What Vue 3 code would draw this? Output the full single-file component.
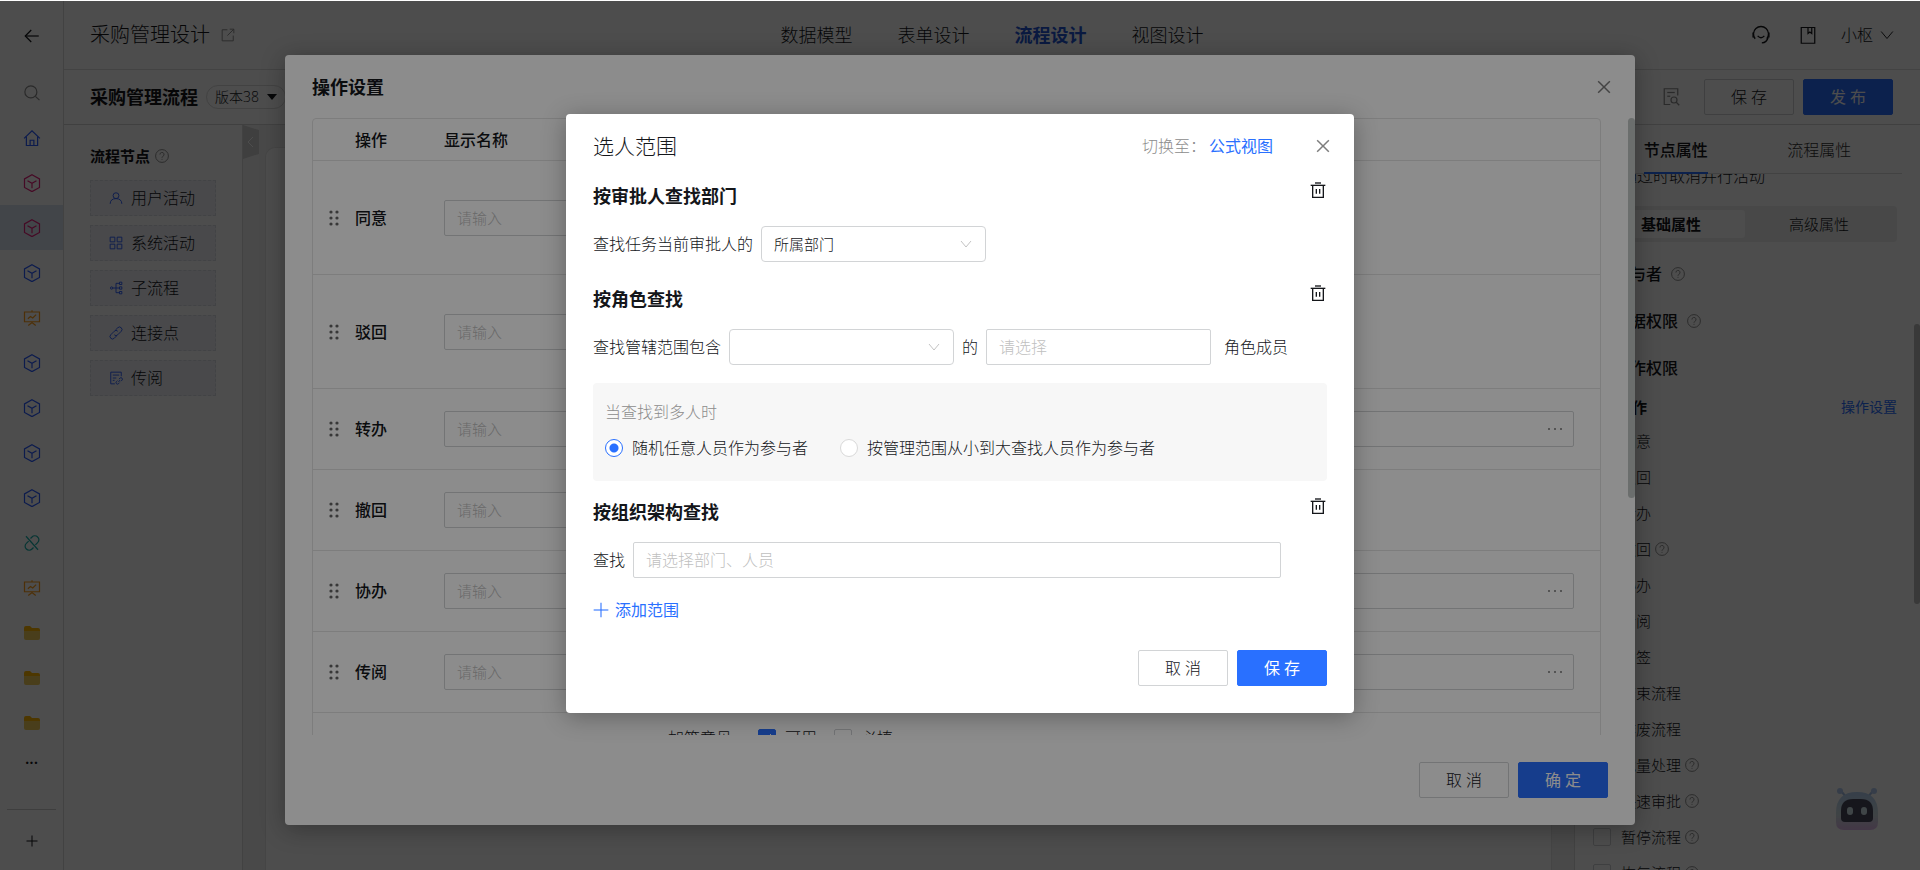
<script setup>
import { ref } from 'vue'

// 24x24 线性图标
const icons = {
  back: ['M21 12H3', 'M11 4l-8 8 8 8'],
  search: ['M10.5 2.5a8 8 0 1 0 0 16a8 8 0 1 0 0-16', 'M16.5 16.5l5.5 5'],
  home: ['M1.500 12.500L12 2.500l10.500 10', 'M4.500 10v12h15V10', 'M9.500 22v-7h5v7'],
  cube: ['M12 1l10 5.500v11.500l-10 5.500-10-5.500V6.500z', 'M6 9l6 3.500 6-3.500', 'M12 12.500V19'],
  board: ['M2 4h20v13H2z', 'M12 1.500V4', 'M6.500 13l3.500-3 3 2 4.500-4.500', 'M7 22l5-4 5 4'],
  unlink: ['M10 6l2-2a5 5 0 0 1 7.500 0a5 5 0 0 1 0 7.500l-3 3', 'M14 18l-2 2a5 5 0 0 1-7.500 0a5 5 0 0 1 0-7.500l3-3', 'M4 3l16 18'],
  user: ['M12 3a5 5 0 1 0 0 10a5 5 0 1 0 0-10', 'M2 22c0-6 4-9 10-9s10 3 10 9'],
  grid: ['M2 2h8v8H2z', 'M14 2h8v8h-8z', 'M2 14h8v8H2z', 'M14 14h8v8h-8z'],
  tree: ['M4.500 10a2 2 0 1 0 0 4a2 2 0 1 0 0-4', 'M6.500 12H18', 'M18 4h-6v16h6', 'M18 2h4v4h-4z', 'M18 10h4v4h-4z', 'M18 18h4v4h-4z'],
  link: ['M11 7l4-4a4 4 0 0 1 6 6l-6 6a4 4 0 0 1-6 0', 'M13 17l-4 4a4 4 0 0 1-6-6l6-6a4 4 0 0 1 6 0'],
  note: ['M21 9V2H3v20h7', 'M6.500 7h11', 'M6.500 12h6', 'M6.500 16h3', 'M17 14l2-2a2.500 2.500 0 0 1 3.500 3.500l-2 2', 'M18 20l-2 2a2.500 2.500 0 0 1-3.500-3.500l2-2', 'M16 19l3-3.500'],
  help: ['M12 1a11 11 0 1 0 0 22a11 11 0 1 0 0-22', 'M8.500 9.500a3.500 3.500 0 1 1 5 3q-1.500 1-1.500 2.500', 'M12 17v1.500'],
  external: ['M11 3H2v19h19v-9', 'M15 2h7v7', 'M22 2L11 13'],
  headset: ['M5 16.500a9 9 0 1 1 14 0', 'M2.500 9v6', 'M21.500 9v6', 'M8 13q4 4.500 8 0', 'M20.500 15q-1.500 6-7.500 6.500'],
  book: ['M3 2h18v21H3z', 'M12 2v8l2.500-2 2.500 2V2'],
  inspect: ['M21 10V1H3v21h8', 'M7 6h10', 'M7 11h4', 'M16 12a4 4 0 1 0 0 8a4 4 0 1 0 0-8', 'M19 19l4 4'],
  down: ['M2 6l10 12L22 6'],
  left: ['M16 2L6 12l10 10'],
  close: ['M2 2l20 20', 'M22 2L2 22'],
  plus: ['M12 1v22', 'M1 12h22'],
  trash: ['M7.500 1.500h9', 'M1 5h22', 'M4 5v18h16V5', 'M9.500 10.500v7', 'M14.500 10.500v7']
}

const menus = [
  { icon: 'home', color: 'blue' },
  { icon: 'cube', color: 'pink' },
  { icon: 'cube', color: 'pink', active: true },
  { icon: 'cube', color: 'blue' },
  { icon: 'board', color: 'orange' },
  { icon: 'cube', color: 'blue' },
  { icon: 'cube', color: 'blue' },
  { icon: 'cube', color: 'blue' },
  { icon: 'cube', color: 'blue' },
  { icon: 'unlink', color: 'teal' },
  { icon: 'board', color: 'orange' },
  { icon: 'folder' },
  { icon: 'folder' },
  { icon: 'folder' }
]

const navs = ['数据模型', '表单设计', '流程设计', '视图设计']
const currentNav = ref('流程设计')

const nodes = [
  { icon: 'user', name: '用户活动' },
  { icon: 'grid', name: '系统活动' },
  { icon: 'tree', name: '子流程' },
  { icon: 'link', name: '连接点' },
  { icon: 'note', name: '传阅' }
]

const rows = [
  { name: '同意', tall: true },
  { name: '驳回', tall: true },
  { name: '转办', picker: true },
  { name: '撤回' },
  { name: '协办', picker: true },
  { name: '传阅', picker: true }
]

const permissions = [
  { name: '同意' },
  { name: '驳回' },
  { name: '转办' },
  { name: '撤回', help: true },
  { name: '协办' },
  { name: '传阅' },
  { name: '加签' },
  { name: '结束流程' },
  { name: '作废流程' },
  { name: '批量处理', help: true },
  { name: '快速审批', help: true },
  { name: '暂停流程', help: true },
  { name: '恢复流程', help: true }
]

const department = ref('所属部门')
const scope = ref('')
const multiple = ref('random')
</script>

<template>
  <div class="app">
    <aside class="sidebar">
      <button class="side-back" aria-label="返回">
        <svg class="icon i18" viewBox="0 0 24 24"><path v-for="d in icons.back" :key="d" :d="d" /></svg>
      </button>
      <button class="side-item grey" aria-label="搜索">
        <svg class="icon i18" viewBox="0 0 24 24"><path v-for="d in icons.search" :key="d" :d="d" /></svg>
      </button>
      <button
        v-for="(menu, index) in menus"
        :key="index"
        class="side-item"
        :class="[menu.color, { active: menu.active }]"
        :aria-label="menu.icon"
      >
        <svg v-if="menu.icon === 'folder'" class="i18" viewBox="0 0 18 18">
          <path d="M1 6h16v8q0 2-2 2H3q-2 0-2-2z" fill="#f5cf5c" />
          <path d="M1 7V4q0-2 2-2h4l2 2h6q2 0 2 2v1z" fill="#ffb800" />
        </svg>
        <svg v-else class="icon i18" viewBox="0 0 24 24"><path v-for="d in icons[menu.icon]" :key="d" :d="d" /></svg>
      </button>
      <span class="side-more">...</span>
      <button class="side-add" aria-label="新增">
        <svg class="icon i12 bold" viewBox="0 0 24 24"><path v-for="d in icons.plus" :key="d" :d="d" /></svg>
      </button>
    </aside>

    <div class="main">
      <header class="header">
        <div class="header-title">
          <span>采购管理设计</span>
          <svg class="icon i14 grey" viewBox="0 0 24 24"><path v-for="d in icons.external" :key="d" :d="d" /></svg>
        </div>
        <nav class="header-nav">
          <a
            v-for="nav in navs"
            :key="nav"
            href="#"
            :class="{ current: nav === currentNav }"
            @click.prevent="currentNav = nav"
          >{{ nav }}</a>
        </nav>
        <div class="header-user">
          <svg class="icon i20" viewBox="0 0 24 24"><path v-for="d in icons.headset" :key="d" :d="d" /></svg>
          <svg class="icon i18" viewBox="0 0 24 24"><path v-for="d in icons.book" :key="d" :d="d" /></svg>
          <button class="user-btn">
            小枢
            <svg class="icon i14" viewBox="0 0 24 24"><path v-for="d in icons.down" :key="d" :d="d" /></svg>
          </button>
        </div>
      </header>

      <div class="toolbar">
        <strong class="flow-name">采购管理流程</strong>
        <button class="version">版本38<span class="caret"></span></button>
        <div class="toolbar-right">
          <svg class="icon i18 grey" viewBox="0 0 24 24"><path v-for="d in icons.inspect" :key="d" :d="d" /></svg>
          <button class="btn">保 存</button>
          <button class="btn primary">发 布</button>
        </div>
      </div>

      <div class="workspace">
        <section class="node-panel">
          <h3>
            流程节点
            <svg class="icon i14 grey" viewBox="0 0 24 24"><path v-for="d in icons.help" :key="d" :d="d" /></svg>
          </h3>
          <div v-for="node in nodes" :key="node.name" class="node">
            <svg class="icon i14 blue" viewBox="0 0 24 24"><path v-for="d in icons[node.icon]" :key="d" :d="d" /></svg>
            {{ node.name }}
          </div>
        </section>

        <div class="canvas">
          <button class="collapse" aria-label="收起">
            <svg class="icon i12 bold" viewBox="0 0 24 24"><path v-for="d in icons.left" :key="d" :d="d" /></svg>
          </button>
          <div class="canvas-card"></div>
        </div>

        <section class="props">
          <div class="tabs">
            <button class="tab current">节点属性</button>
            <button class="tab">流程属性</button>
          </div>
          <div class="props-body">
            <label class="perm cut-line"><input type="checkbox" />通过时取消并行活动</label>
            <div class="segment">
              <button class="current">基础属性</button>
              <button>高级属性</button>
            </div>
            <h4>
              参与者
              <svg class="icon i14 grey" viewBox="0 0 24 24"><path v-for="d in icons.help" :key="d" :d="d" /></svg>
            </h4>
            <h4>
              数据权限
              <svg class="icon i14 grey" viewBox="0 0 24 24"><path v-for="d in icons.help" :key="d" :d="d" /></svg>
            </h4>
            <h4>操作权限</h4>
            <div class="perm-head">
              <label><input type="checkbox" />操作</label>
              <a href="#" @click.prevent>操作设置</a>
            </div>
            <label v-for="item in permissions" :key="item.name" class="perm">
              <input type="checkbox" />{{ item.name }}
              <svg v-if="item.help" class="icon i14 grey" viewBox="0 0 24 24"><path v-for="d in icons.help" :key="d" :d="d" /></svg>
            </label>
          </div>
          <span class="props-scroll"></span>
        </section>
      </div>
    </div>

    <svg class="robot" viewBox="0 0 46 46">
      <defs>
        <linearGradient id="robotShell" x1="0" y1="0" x2="0" y2="1">
          <stop offset="0" stop-color="#b4d2f5" />
          <stop offset="0.6" stop-color="#d2e1e6" />
          <stop offset="1" stop-color="#e1b9eb" />
        </linearGradient>
      </defs>
      <path d="M6 5l6 7M38 5l-6 7" stroke="#a5bee6" stroke-width="2" />
      <circle cx="5" cy="5" r="3" fill="#b4cdf5" />
      <circle cx="39" cy="5" r="3" fill="#b4cdf5" />
      <path d="M1 27Q1 6 22 6t21 21v9q0 8-8 8H9q-8 0-8-8z" fill="url(#robotShell)" />
      <path d="M6 25q0-12 12-12h8q12 0 12 12v7q0 4-4 4H10q-4 0-4-4z" fill="#4b4b5f" />
      <rect x="12" y="21" width="6" height="8" rx="3" fill="#d2e6eb" />
      <rect x="26" y="21" width="6" height="8" rx="3" fill="#d2e6eb" />
    </svg>

    <!-- 操作设置 -->
    <div class="mask">
      <div class="dialog setting" role="dialog" aria-label="操作设置">
        <div class="setting-head">
          <h2>操作设置</h2>
          <button class="icon-btn" aria-label="关闭">
            <svg class="icon i14 heavy" viewBox="0 0 24 24"><path v-for="d in icons.close" :key="d" :d="d" /></svg>
          </button>
        </div>
        <div class="setting-body">
          <table>
            <thead>
              <tr>
                <th class="col-drag"></th>
                <th class="col-name">操作</th>
                <th class="col-label">显示名称</th>
                <th></th>
              </tr>
            </thead>
            <tbody>
              <tr v-for="row in rows" :key="row.name" :class="{ tall: row.tall }">
                <td class="col-drag">
                  <svg class="drag" viewBox="0 0 10 18">
                    <circle v-for="n in 6" :key="n" :cx="n % 2 ? 2 : 8" :cy="Math.ceil(n / 2) * 6 - 3" r="1.600" />
                  </svg>
                </td>
                <td class="col-name">{{ row.name }}</td>
                <td class="col-label"><input class="text-input" placeholder="请输入" :aria-label="row.name" /></td>
                <td class="col-extra">
                  <button v-if="row.picker" class="picker" aria-label="选择">
                    <svg class="dots" viewBox="0 0 16 4">
                      <circle v-for="n in 3" :key="n" :cx="n * 6 - 4" cy="2" r="1" />
                    </svg>
                  </button>
                </td>
              </tr>
              <tr class="tall">
                <td></td>
                <td></td>
                <td></td>
                <td class="col-opinion">
                  <div class="opinion">
                    <span>加签意见</span>
                    <label><input type="checkbox" checked />可用</label>
                    <label><input type="checkbox" />必填</label>
                  </div>
                </td>
              </tr>
            </tbody>
          </table>
          <span class="setting-scroll"></span>
        </div>
        <div class="dialog-foot">
          <button class="btn">取 消</button>
          <button class="btn primary">确 定</button>
        </div>
      </div>
    </div>

    <!-- 选人范围 -->
    <div class="mask mask-top">
      <div class="dialog range" role="dialog" aria-label="选人范围">
        <div class="range-head">
          <h2>选人范围</h2>
          <span class="switch">切换至：</span>
          <a href="#" @click.prevent>公式视图</a>
          <button class="icon-btn" aria-label="关闭">
            <svg class="icon i14 heavy" viewBox="0 0 24 24"><path v-for="d in icons.close" :key="d" :d="d" /></svg>
          </button>
        </div>

        <div class="rule-title">
          <h3>按审批人查找部门</h3>
          <button class="trash" aria-label="删除">
            <svg class="icon i16 bold" viewBox="0 0 24 24"><path v-for="d in icons.trash" :key="d" :d="d" /></svg>
          </button>
        </div>
        <div class="rule-row">
          <label for="department">查找任务当前审批人的</label>
          <div class="select">
            <select id="department" v-model="department">
              <option>所属部门</option>
            </select>
            <svg class="icon i12" viewBox="0 0 24 24"><path v-for="d in icons.down" :key="d" :d="d" /></svg>
          </div>
        </div>

        <div class="rule-title">
          <h3>按角色查找</h3>
          <button class="trash" aria-label="删除">
            <svg class="icon i16 bold" viewBox="0 0 24 24"><path v-for="d in icons.trash" :key="d" :d="d" /></svg>
          </button>
        </div>
        <div class="rule-row">
          <label for="scope">查找管辖范围包含</label>
          <div class="select">
            <select id="scope" v-model="scope">
              <option value=""></option>
            </select>
            <svg class="icon i12" viewBox="0 0 24 24"><path v-for="d in icons.down" :key="d" :d="d" /></svg>
          </div>
          <label for="role">的</label>
          <input id="role" class="text-input role" placeholder="请选择" />
          <span class="role-suffix">角色成员</span>
        </div>
        <div class="multi">
          <p>当查找到多人时</p>
          <div class="radios">
            <label><input v-model="multiple" type="radio" value="random" />随机任意人员作为参与者</label>
            <label><input v-model="multiple" type="radio" value="scope" />按管理范围从小到大查找人员作为参与者</label>
          </div>
        </div>

        <div class="rule-title">
          <h3>按组织架构查找</h3>
          <button class="trash" aria-label="删除">
            <svg class="icon i16 bold" viewBox="0 0 24 24"><path v-for="d in icons.trash" :key="d" :d="d" /></svg>
          </button>
        </div>
        <div class="rule-row org-row">
          <label for="org">查找</label>
          <input id="org" class="text-input" placeholder="请选择部门、人员" />
        </div>

        <button class="add">
          <svg class="icon i16" viewBox="0 0 24 24"><path v-for="d in icons.plus" :key="d" :d="d" /></svg>
          添加范围
        </button>

        <div class="dialog-foot">
          <button class="btn">取 消</button>
          <button class="btn primary">保 存</button>
        </div>
      </div>
    </div>
  </div>
</template>

<style>
body {
  margin: 0;
  background: #fff;
}
</style>

<style scoped>
.app {
  position: relative;
  display: flex;
  height: 100vh;
  padding-top: 1px;
  box-sizing: border-box;
  overflow: hidden;
  font-family: 'Open Sans', 'Noto Sans CJK SC', sans-serif;
  font-size: 16px;
  font-weight: 300;
  line-height: 24px;
  color: #14161a;
}

.app * {
  box-sizing: border-box;
}

h2,
h3,
h4,
p {
  margin: 0;
}

button,
input,
select {
  font: inherit;
  color: inherit;
}

button {
  padding: 0;
  border: none;
  background: none;
  cursor: pointer;
}

a {
  color: #2970ff;
  font-weight: 400;
  text-decoration: none;
}

.icon {
  flex: none;
  fill: none;
  stroke: currentColor;
  stroke-width: 1.6;
}

.icon.bold {
  stroke-width: 2;
}

.icon.heavy {
  stroke-width: 2.6;
}

.i12 {
  width: 12px;
  height: 12px;
}

.i14 {
  width: 14px;
  height: 14px;
}

.i16 {
  width: 16px;
  height: 16px;
}

.i18 {
  width: 18px;
  height: 18px;
}

.i20 {
  width: 20px;
  height: 20px;
}

.blue {
  color: #2a5cff;
}

.pink {
  color: #e8207c;
}

.orange {
  color: #ff9f1a;
}

.teal {
  color: #16b3ac;
}

.grey {
  color: #8c8c8c;
}

/* 左侧菜单 */
.sidebar {
  display: flex;
  flex: none;
  flex-direction: column;
  align-items: center;
  width: 64px;
  border-right: 1px solid #dcdcdc;
}

.side-back {
  display: flex;
  flex: none;
  align-items: center;
  height: 69px;
}

.side-item {
  display: flex;
  flex: none;
  align-items: center;
  justify-content: center;
  width: 100%;
  height: 45px;
}

.side-item.active {
  background: #dae6f2;
}

.side-more {
  height: 64px;
  line-height: 26px;
  font-weight: 600;
}

.side-add {
  display: flex;
  justify-content: center;
  width: 49px;
  padding-top: 25px;
  border-top: 1px solid #d0d0d0;
}

/* 顶部 */
.main {
  display: flex;
  flex: 1;
  flex-direction: column;
  min-width: 0;
}

.header {
  display: grid;
  flex: none;
  grid-template-columns: 1fr auto 1fr;
  align-items: center;
  height: 69px;
  padding: 0 26px;
  border-bottom: 1px solid #dedede;
}

.header-title {
  display: flex;
  align-items: center;
  gap: 11px;
  font-size: 20px;
}

.header-nav {
  display: flex;
  gap: 45px;
  font-size: 18px;
}

.header-nav a {
  color: inherit;
  font-weight: 300;
}

.header-nav a.current {
  color: #2457d6;
  font-weight: 700;
}

.header-user {
  display: flex;
  align-items: center;
  justify-content: flex-end;
  gap: 28px;
}

.user-btn {
  display: flex;
  align-items: center;
  gap: 7px;
  margin-left: -4px;
}

.toolbar {
  display: flex;
  flex: none;
  align-items: center;
  height: 55px;
  padding: 0 27px 0 26px;
  border-bottom: 1px solid #d8d8d8;
}

.flow-name {
  font-size: 18px;
  font-weight: 700;
}

.version {
  display: flex;
  align-items: center;
  gap: 8px;
  height: 24px;
  margin-left: 8px;
  padding: 0 8px;
  border: 1px solid #dcdcdc;
  border-radius: 12px;
  font-size: 14px;
}

.caret {
  border: 5px solid transparent;
  border-top: 6px solid #14161a;
  border-bottom: none;
}

.toolbar-right {
  display: flex;
  align-items: center;
  gap: 9px;
  margin-left: auto;
}

.toolbar-right .icon {
  margin-right: 15px;
}

.btn {
  width: 90px;
  height: 36px;
  border: 1px solid #d2d4d6;
  border-radius: 2px;
  background: #fff;
}

.btn.primary {
  border-color: #2970ff;
  background: #2970ff;
  color: #fff;
  font-weight: 400;
}

/* 工作区 */
.workspace {
  display: flex;
  flex: 1;
  min-height: 0;
}

.node-panel {
  display: flex;
  flex: none;
  flex-direction: column;
  gap: 9px;
  width: 179px;
  padding: 18px 26px 0;
  border-right: 1px solid #dcdcdc;
}

.node-panel h3 {
  display: flex;
  align-items: center;
  gap: 5px;
  height: 25px;
  margin-bottom: 3px;
  font-size: 15px;
  font-weight: 600;
}

.node {
  display: flex;
  align-items: center;
  gap: 8px;
  height: 36px;
  padding-left: 18px;
  border: 1px dashed #dcdfe6;
  background: #f2f4fa;
}

.canvas {
  position: relative;
  display: flex;
  flex: 1;
  padding: 22px 22px 0;
  background: #f3f3f3;
}

.canvas-card {
  flex: 1;
  border: 1px solid #e6e6e6;
  border-bottom: none;
  border-radius: 10px 10px 0 0;
  background: #fff;
}

.collapse {
  position: absolute;
  top: 0;
  left: 0;
  display: flex;
  align-items: center;
  justify-content: center;
  width: 16px;
  height: 34px;
  background: #d3d3d3;
  color: #fff;
  clip-path: polygon(0 0, 100% 15%, 100% 85%, 0 100%);
}

.props {
  position: relative;
  display: flex;
  flex: none;
  flex-direction: column;
  width: 346px;
  padding: 0 18px;
  border-left: 1px solid #dcdcdc;
}

.tabs {
  display: flex;
  flex: none;
  height: 49px;
  padding: 0 11px;
  border-bottom: 1px solid #dcdcdc;
}

.tab {
  flex: 1;
  height: 49px;
  color: #333;
}

.tab.current {
  background: linear-gradient(#2970ff, #2970ff) center bottom / 64px 2px no-repeat;
  color: #14161a;
  font-weight: 500;
}

.props-body {
  display: flex;
  flex: 1;
  flex-direction: column;
  min-height: 0;
  padding-right: 5px;
  overflow: hidden;
}

.segment {
  display: flex;
  flex: none;
  height: 36px;
  margin-bottom: 8px;
  padding: 4px;
  border-radius: 4px;
  background: #efefef;
  font-size: 15px;
}

.segment button {
  flex: 1;
  border-radius: 3px;
}

.segment .current {
  background: #fff;
  font-weight: 600;
}

.props h4 {
  display: flex;
  flex: none;
  align-items: center;
  gap: 9px;
  height: 47px;
  padding-left: 21px;
  font-size: 16px;
  font-weight: 500;
}

.perm-head {
  display: flex;
  flex: none;
  align-items: center;
  justify-content: space-between;
  height: 32px;
  font-size: 14px;
}

.perm-head label {
  display: flex;
  align-items: center;
  gap: 6px;
  font-size: 15px;
  font-weight: 600;
}

.perm {
  display: flex;
  flex: none;
  align-items: center;
  height: 36px;
  font-size: 15px;
}

.perm input[type='checkbox'] {
  margin-right: 10px;
}

.perm .icon {
  margin-left: 4px;
}

.perm.cut-line {
  margin: -16px 0 12px;
  font-size: 16px;
}

input[type='checkbox'] {
  width: 18px;
  height: 18px;
  margin: 0;
  border: 1px solid #d0d2d6;
  border-radius: 2px;
  background: #fff;
  appearance: none;
}

input[type='checkbox']:checked {
  border-color: #2970ff;
  background: linear-gradient(135deg, transparent 48%, #fff 48%, #fff 56%, transparent 56%) center / 8px 8px no-repeat #2970ff;
}

.props-scroll {
  position: absolute;
  top: 199px;
  right: 0;
  width: 6px;
  height: 280px;
  border-radius: 3px;
  background: #bfbfbf;
}

.robot {
  position: absolute;
  right: 39px;
  bottom: 38px;
  width: 46px;
  height: 46px;
}

/* 弹窗 */
.mask {
  position: absolute;
  inset: 1px 0 0;
  display: flex;
  align-items: stretch;
  justify-content: center;
  padding: 54px 0 45px;
  background: rgba(0, 0, 0, 0.45);
}

.mask-top {
  align-items: flex-start;
  padding-top: 113px;
}

.dialog {
  display: flex;
  flex-direction: column;
  max-width: 100%;
  border-radius: 4px;
  background: #fff;
  box-shadow: 0 4px 24px rgba(0, 0, 0, 0.3);
}

.icon-btn {
  display: flex;
  color: #7d7d7d;
}

.dialog-foot {
  display: flex;
  justify-content: flex-end;
  gap: 9px;
}

.setting {
  width: 1350px;
  padding: 0 0 27px 27px;
}

.setting-head {
  display: flex;
  align-items: center;
  justify-content: space-between;
  height: 63px;
  padding-right: 24px;
}

.setting-head h2 {
  font-size: 18px;
  font-weight: 600;
}

.setting-body {
  position: relative;
  flex: 1;
  min-height: 0;
  padding-right: 34px;
  overflow: hidden;
}

.setting-scroll {
  position: absolute;
  top: 0;
  right: 0;
  width: 7px;
  height: 380px;
  border-radius: 4px;
  background: #c3c8c7;
}

.setting .dialog-foot {
  padding: 27px 27px 0 0;
}

table {
  width: 100%;
  border: 1px solid #e4e4e4;
  border-radius: 4px;
  border-spacing: 0;
  table-layout: fixed;
}

th,
td {
  height: 81px;
  padding: 0;
  border-bottom: 1px solid #e4e4e4;
  text-align: left;
}

th {
  height: 42px;
  font-weight: 500;
}

.tall td {
  height: 114px;
}

.col-drag {
  width: 42px;
  padding-left: 16px;
}

.drag {
  display: block;
  width: 10px;
  height: 18px;
  fill: #666;
}

.col-name {
  width: 89px;
  font-weight: 500;
}

.col-label {
  width: 224px;
}

td.col-label {
  padding-right: 24px;
}

.text-input {
  width: 100%;
  height: 36px;
  padding: 0 12px;
  border: 1px solid #d2d4d6;
  border-radius: 2px;
  outline: none;
  background: #fff;
}

.text-input::placeholder {
  color: #bfbfbf;
  opacity: 1;
}

table .text-input {
  font-size: 15px;
}

.col-extra {
  padding: 0 26px 0 240px;
}

.picker {
  display: flex;
  align-items: center;
  justify-content: flex-end;
  width: 100%;
  height: 36px;
  padding-right: 10px;
  border: 1px solid #d2d4d6;
  border-radius: 2px;
}

.dots {
  width: 16px;
  height: 4px;
  fill: #777;
}

td.col-opinion {
  padding-top: 13px;
  vertical-align: top;
}

.opinion {
  display: flex;
  align-items: center;
}

.opinion span {
  margin-right: 26px;
}

.opinion label {
  display: flex;
  align-items: center;
  gap: 9px;
  margin-right: 17px;
}

.range {
  width: 788px;
  padding: 18px 27px 27px;
}

.range-head {
  display: flex;
  align-items: center;
  height: 28px;
  margin-bottom: 14px;
}

.range-head h2 {
  margin-right: auto;
  font-size: 21px;
  font-weight: 300;
}

.range-head .switch {
  margin-right: 3px;
  color: #8c8c8c;
}

.range-head .icon-btn {
  margin: 0 -3px 0 43px;
}

.rule-title {
  display: flex;
  justify-content: space-between;
  height: 44px;
  margin-top: 8px;
  padding-right: 1px;
  line-height: 28px;
}

.rule-title h3 {
  font-size: 18px;
  font-weight: 600;
}

.trash {
  align-self: flex-start;
  height: 16px;
}

.trash .icon {
  display: block;
}

.rule-row {
  display: flex;
  align-items: center;
  gap: 8px;
  height: 36px;
  margin-bottom: 15px;
}

.select {
  position: relative;
  width: 225px;
}

.select select {
  display: block;
  width: 100%;
  height: 36px;
  padding: 0 12px;
  border: 1px solid #d2d4d6;
  border-radius: 4px;
  outline: none;
  background: #fff;
  font-size: 15px;
  appearance: none;
}

.select .icon {
  position: absolute;
  top: 12px;
  right: 14px;
  color: #b4b4b4;
  pointer-events: none;
}

.role {
  width: 225px;
}

.role-suffix {
  margin-left: 5px;
}

.multi {
  height: 98px;
  margin: 3px 0 9px;
  padding: 17px 12px;
  border-radius: 4px;
  background: #f7f7f7;
}

.multi p {
  margin-bottom: 12px;
  color: #8c8c8c;
}

.radios {
  display: flex;
  gap: 32px;
}

.radios label {
  display: flex;
  align-items: center;
  gap: 9px;
}

input[type='radio'] {
  width: 18px;
  height: 18px;
  margin: 0;
  border: 1px solid #d9d9d9;
  border-radius: 50%;
  background: #fff;
  appearance: none;
}

input[type='radio']:checked {
  border-color: #2970ff;
  background: radial-gradient(circle, #2970ff 4px, #fff 5px);
}

.org-row {
  padding-right: 46px;
}

.org-row label {
  flex: none;
}

.add {
  display: flex;
  align-items: center;
  align-self: flex-start;
  gap: 6px;
  margin: 5px 0 28px;
  color: #2970ff;
  font-weight: 400;
}
</style>
